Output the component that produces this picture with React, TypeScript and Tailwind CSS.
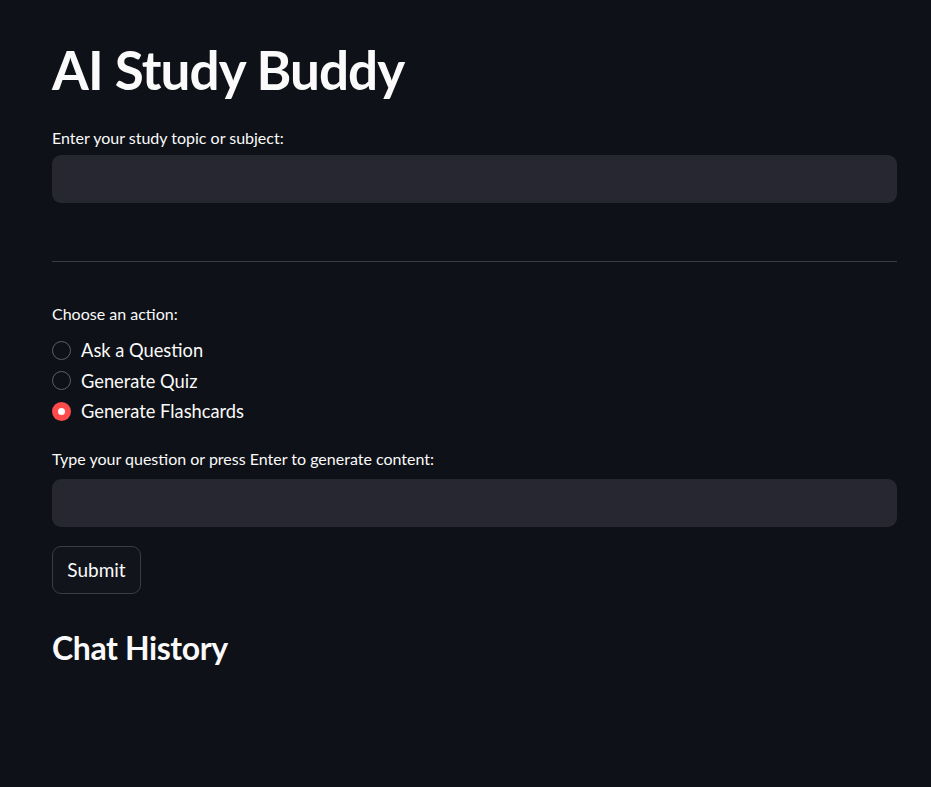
import React from "react";

const font = { fontFamily: "Lato, 'Noto Sans', sans-serif" };

function Radio({ label, checked }: { label: string; checked?: boolean }) {
  return (
    <div className="flex h-[30.5px] items-center">
      {checked ? (
        <div className="flex h-[19px] w-[19px] items-center justify-center rounded-full bg-[#ff4b4b]">
          <div className="h-[7px] w-[7px] rounded-full bg-white" />
        </div>
      ) : (
        <div className="h-[19px] w-[19px] rounded-full border border-[#5c5f66] bg-[#0e1117]" />
      )}
      <span className="ml-[10px] text-[18.3px] leading-[24px] text-[#fafafa]">{label}</span>
    </div>
  );
}

export default function App() {
  return (
    <div className="min-h-[787px] w-full bg-[#0e1117] text-[#fafafa]" style={font}>
      <div className="ml-[52px] flex w-[845px] flex-col pt-[40px]">
        <div className="text-[53px] font-bold leading-[60px] tracking-[-0.9px]">AI Study Buddy</div>
        <div className="mt-[28px] text-[16px] leading-[20px]">Enter your study topic or subject:</div>
        <div className="mt-[7px] h-[48px] rounded-[9px] bg-[#262730]" />
        <div className="mt-[58px] h-px bg-[#3a3c43]" />
        <div className="mt-[42px] text-[16px] leading-[20px]">Choose an action:</div>
        <div className="mt-[11px] flex flex-col">
          <Radio label="Ask a Question" />
          <Radio label="Generate Quiz" />
          <Radio label="Generate Flashcards" checked />
        </div>
        <div className="mt-[22.5px] text-[16px] leading-[20px]">
          Type your question or press Enter to generate content:
        </div>
        <div className="mt-[10px] h-[48px] rounded-[9px] bg-[#262730]" />
        <div className="mt-[19px] flex">
          <button className="flex h-[48px] w-[89px] items-center justify-center rounded-[9px] border border-[#3b3d44] bg-[#11141b] text-[19px] text-[#fafafa]">
            Submit
          </button>
        </div>
        <div className="mt-[34px] text-[32px] font-bold leading-[40px] tracking-[-0.4px]">Chat History</div>
      </div>
    </div>
  );
}
